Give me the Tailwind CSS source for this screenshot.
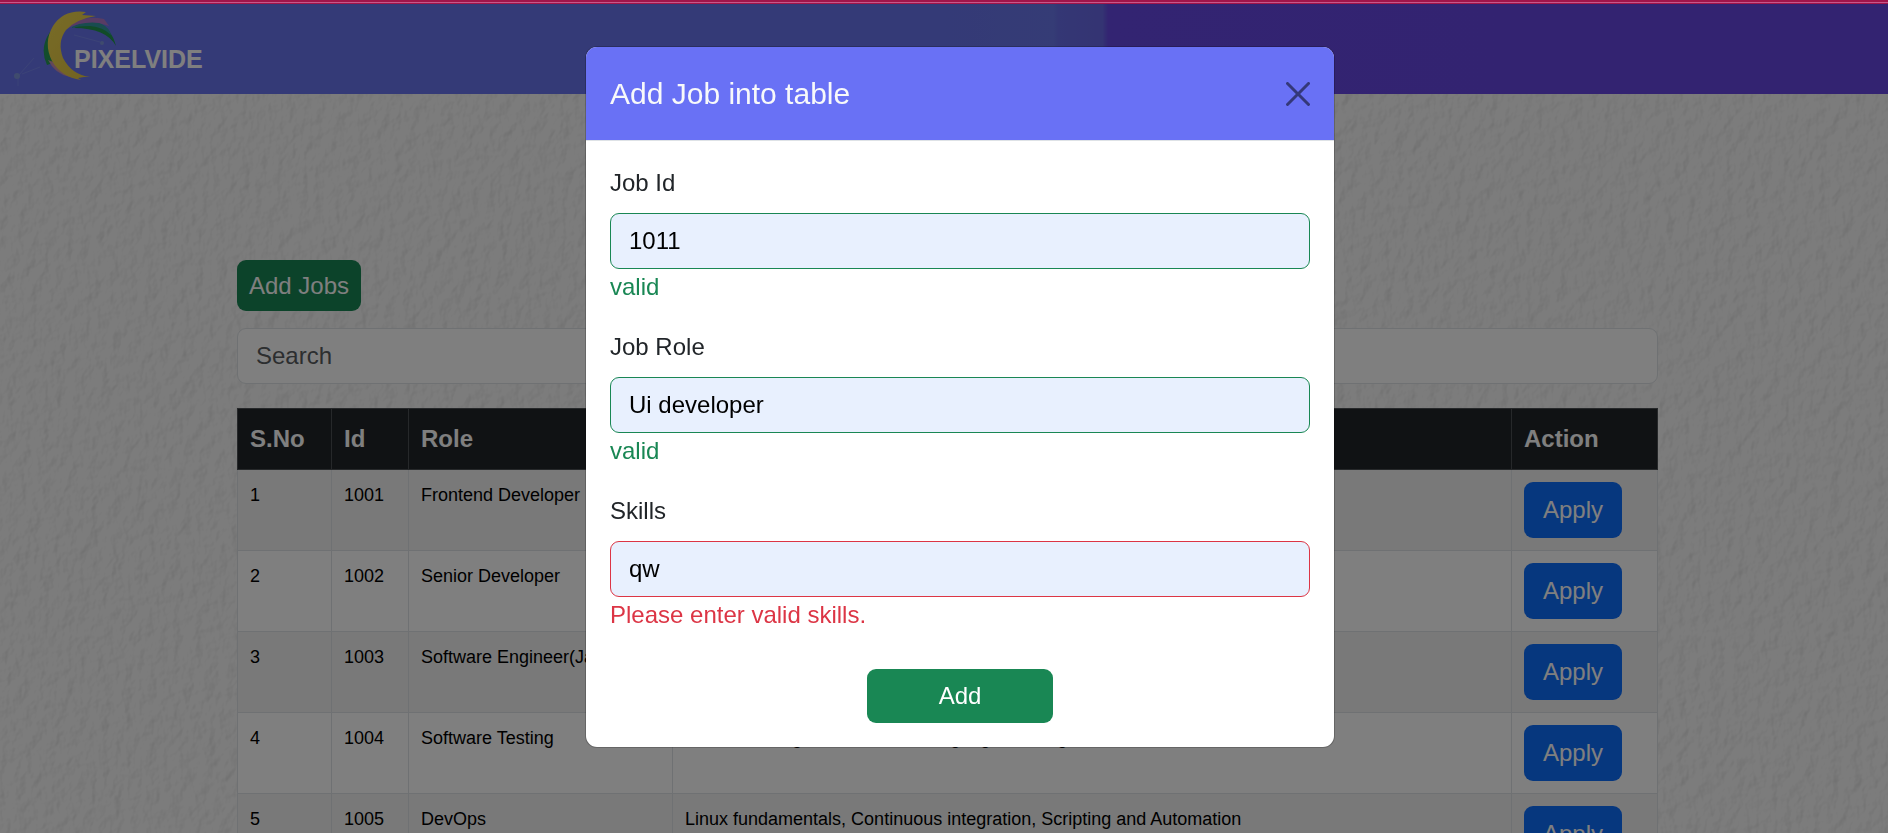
<!DOCTYPE html>
<html lang="en">
<head>
<meta charset="utf-8">
<title>Pixelvide Jobs</title>
<script src="https://cdn.jsdelivr.net/npm/@tailwindcss/browser@4"></script>
</head>
<body class="relative h-screen overflow-hidden bg-[#f8f8f8] font-['Liberation_Sans',Arial,sans-serif] text-2xl/9 text-[#212529]">

<!-- Plaster wall texture -->
<svg class="absolute inset-0 size-full" aria-hidden="true">
  <filter id="plaster" x="0" y="0" width="100%" height="100%" color-interpolation-filters="sRGB">
    <feTurbulence type="fractalNoise" baseFrequency="0.085 0.065" numOctaves="3" seed="7" result="n"/>
    <feDiffuseLighting in="n" surfaceScale="1.2" diffuseConstant="1.38" lighting-color="#fff">
      <feDistantLight azimuth="215" elevation="44"/>
    </feDiffuseLighting>
  </filter>
  <rect width="100%" height="100%" filter="url(#plaster)" opacity=".22"/>
</svg>

<header class="relative border-t-4 border-[#6a71f5]">
  <div class="flex h-[90px] items-center bg-[linear-gradient(90deg,#6974ee_0,#6974ee_50%,#6a78ec_55.8%,#686eea_56.1%,#6868e6_58.4%,#6648e4_58.7%,#6646e2_100%)]">
    <svg class="h-[90px] w-[220px]" viewBox="0 4 220 90" role="img" aria-label="Pixelvide">
      <defs>
        <linearGradient id="gold" x1="0" y1="0" x2="1" y2="1"><stop offset="0" stop-color="#f0d850"/><stop offset="1" stop-color="#e4c440"/></linearGradient>
        <filter id="soft"><feGaussianBlur stdDeviation="0.7"/></filter>
      </defs>
      <g stroke="#8fa8f0" stroke-opacity=".35" fill="none"><path d="M19 75L34 58M22 74L40 67M18 78V86M74 35L100 42"/></g>
      <circle cx="17" cy="76" r="3" fill="#7f96dc"/><circle cx="102" cy="43" r="2" fill="#7f96dc"/>
      <g filter="url(#soft)">
        <path d="M50 32Q39 48 47 65L56 62 55 35Z" fill="#259a58"/>
        <path d="M74 28Q82 22 97 24 111 27 116 46Q106 28 74 28Z" fill="#20964f"/>
        <path d="M72 27Q86 20 100 23 110 28 111 35 103 27 90 26 78 26 72 28Z" fill="#3098a0"/>
        <path d="M66 29Q80 14 104 19L109 26 99 23Q82 21 66 29Z" fill="#b078c8"/>
        <path d="M48 60Q55 74 70 77L64 66Z" fill="#c890b0"/>
        <path d="M86 12Q64 9 53 26Q43 43 52 61Q61 77 81 80L78 78 84 77 90 77Q72 75 63 58Q57 42 66 30Q76 19 96 16L82 15Z" fill="url(#gold)"/>
      </g>
      <text x="74" y="68" font-family="Liberation Sans" font-weight="700" font-size="25" fill="#fff">PIXELVIDE</text>
    </svg>
  </div>
</header>

<main class="relative pt-[166px] pl-[7px]">
  <div class="mx-auto w-[1421px] max-w-full">
    <button class="block rounded-[9px] bg-[#198754] px-3 pt-2 pb-[7px] text-white">Add Jobs</button>
    <input type="search" aria-label="Search" placeholder="Search" class="mt-[17px] block w-full rounded-[9px] border border-[#dee2e6] bg-white px-[18px] py-[9px] placeholder:text-[#595c5f]">
    <table class="mt-6 w-full table-fixed border-collapse text-lg/7 text-black">
      <colgroup><col class="w-[94px]"><col class="w-[77px]"><col class="w-[264px]"><col><col class="w-[146px]"></colgroup>
      <thead class="bg-[#212529] text-left text-2xl/9 text-white">
        <tr class="h-[61px] [&>th]:border [&>th]:border-[#4d5154] [&>th]:px-3"><th>S.No</th><th>Id</th><th>Role</th><th>Skills</th><th>Action</th></tr>
      </thead>
      <tbody class="[&>tr]:h-[81px] [&>tr]:bg-white [&>tr:nth-child(odd)]:bg-[#f2f2f2] [&_td]:border [&_td]:border-[#dee2e6] [&_td]:px-3 [&_td]:pt-[11px] [&_td]:align-top [&_button]:mt-px [&_button]:block [&_button]:rounded-[9px] [&_button]:bg-[#0d6efd] [&_button]:px-[19px] [&_button]:py-[10px] [&_button]:text-2xl/9 [&_button]:text-white">
        <tr><td>1</td><td>1001</td><td>Frontend Developer</td><td>HTML, CSS, JavaScript</td><td><button>Apply</button></td></tr>
        <tr><td>2</td><td>1002</td><td>Senior Developer</td><td>Java, Spring, SQL</td><td><button>Apply</button></td></tr>
        <tr><td>3</td><td>1003</td><td>Software Engineer(Java)</td><td>Core Java, Data structures</td><td><button>Apply</button></td></tr>
        <tr><td>4</td><td>1004</td><td>Software Testing</td><td>Manual testing, Automation in languages testing</td><td><button>Apply</button></td></tr>
        <tr><td>5</td><td>1005</td><td>DevOps</td><td>Linux fundamentals, Continuous integration, Scripting and Automation</td><td><button>Apply</button></td></tr>
      </tbody>
    </table>
  </div>
</main>

<!-- Modal and its backdrop -->
<div class="fixed inset-0 flex items-start justify-center bg-black/50 pt-[46px] pl-8">
  <div role="dialog" aria-modal="true" aria-labelledby="dialog-title" class="w-[750px] max-w-full rounded-xl border border-black/20 bg-white bg-clip-padding">
    <div class="flex items-center justify-between rounded-t-[11px] border-b border-[#dee2e6] bg-[#6971f5] bg-clip-padding p-6">
      <h1 id="dialog-title" class="text-3xl/[45px] text-[#f8f9fa]">Add Job into table</h1>
      <button aria-label="Close" class="opacity-50">
        <svg class="size-6" viewBox="0 0 16 16"><path d="M.293.293a1 1 0 0 1 1.414 0L8 6.586 14.293.293a1 1 0 1 1 1.414 1.414L9.414 8l6.293 6.293a1 1 0 0 1-1.414 1.414L8 9.414l-6.293 6.293a1 1 0 0 1-1.414-1.414L6.586 8 .293 1.707a1 1 0 0 1 0-1.414z"/></svg>
      </button>
    </div>
    <form class="flex flex-col gap-6 p-6">
      <div>
        <label for="job-id" class="mb-3 block">Job Id</label>
        <input id="job-id" value="1011" class="block w-full rounded-[9px] border border-[#198754] bg-[#e8f0fe] px-[18px] py-[9px] text-black">
        <p class="text-[#198754]">valid</p>
      </div>
      <div>
        <label for="job-role" class="mb-3 block">Job Role</label>
        <input id="job-role" value="Ui developer" class="block w-full rounded-[9px] border border-[#198754] bg-[#e8f0fe] px-[18px] py-[9px] text-black">
        <p class="text-[#198754]">valid</p>
      </div>
      <div>
        <label for="skills" class="mb-3 block">Skills</label>
        <input id="skills" value="qw" class="block w-full rounded-[9px] border border-[#dc3545] bg-[#e8f0fe] px-[18px] py-[9px] text-black">
        <p class="text-[#dc3545]">Please enter valid skills.</p>
      </div>
      <button type="button" class="mx-auto mt-3 w-[186px] rounded-[9px] bg-[#198754] py-[9px] text-white">Add</button>
    </form>
  </div>
</div>

<!-- Page loading bar -->
<div class="fixed inset-x-0 top-0 h-1 border-t-2 border-b border-[#a0154a] bg-[#c8588a]"></div>
</body>
</html>
